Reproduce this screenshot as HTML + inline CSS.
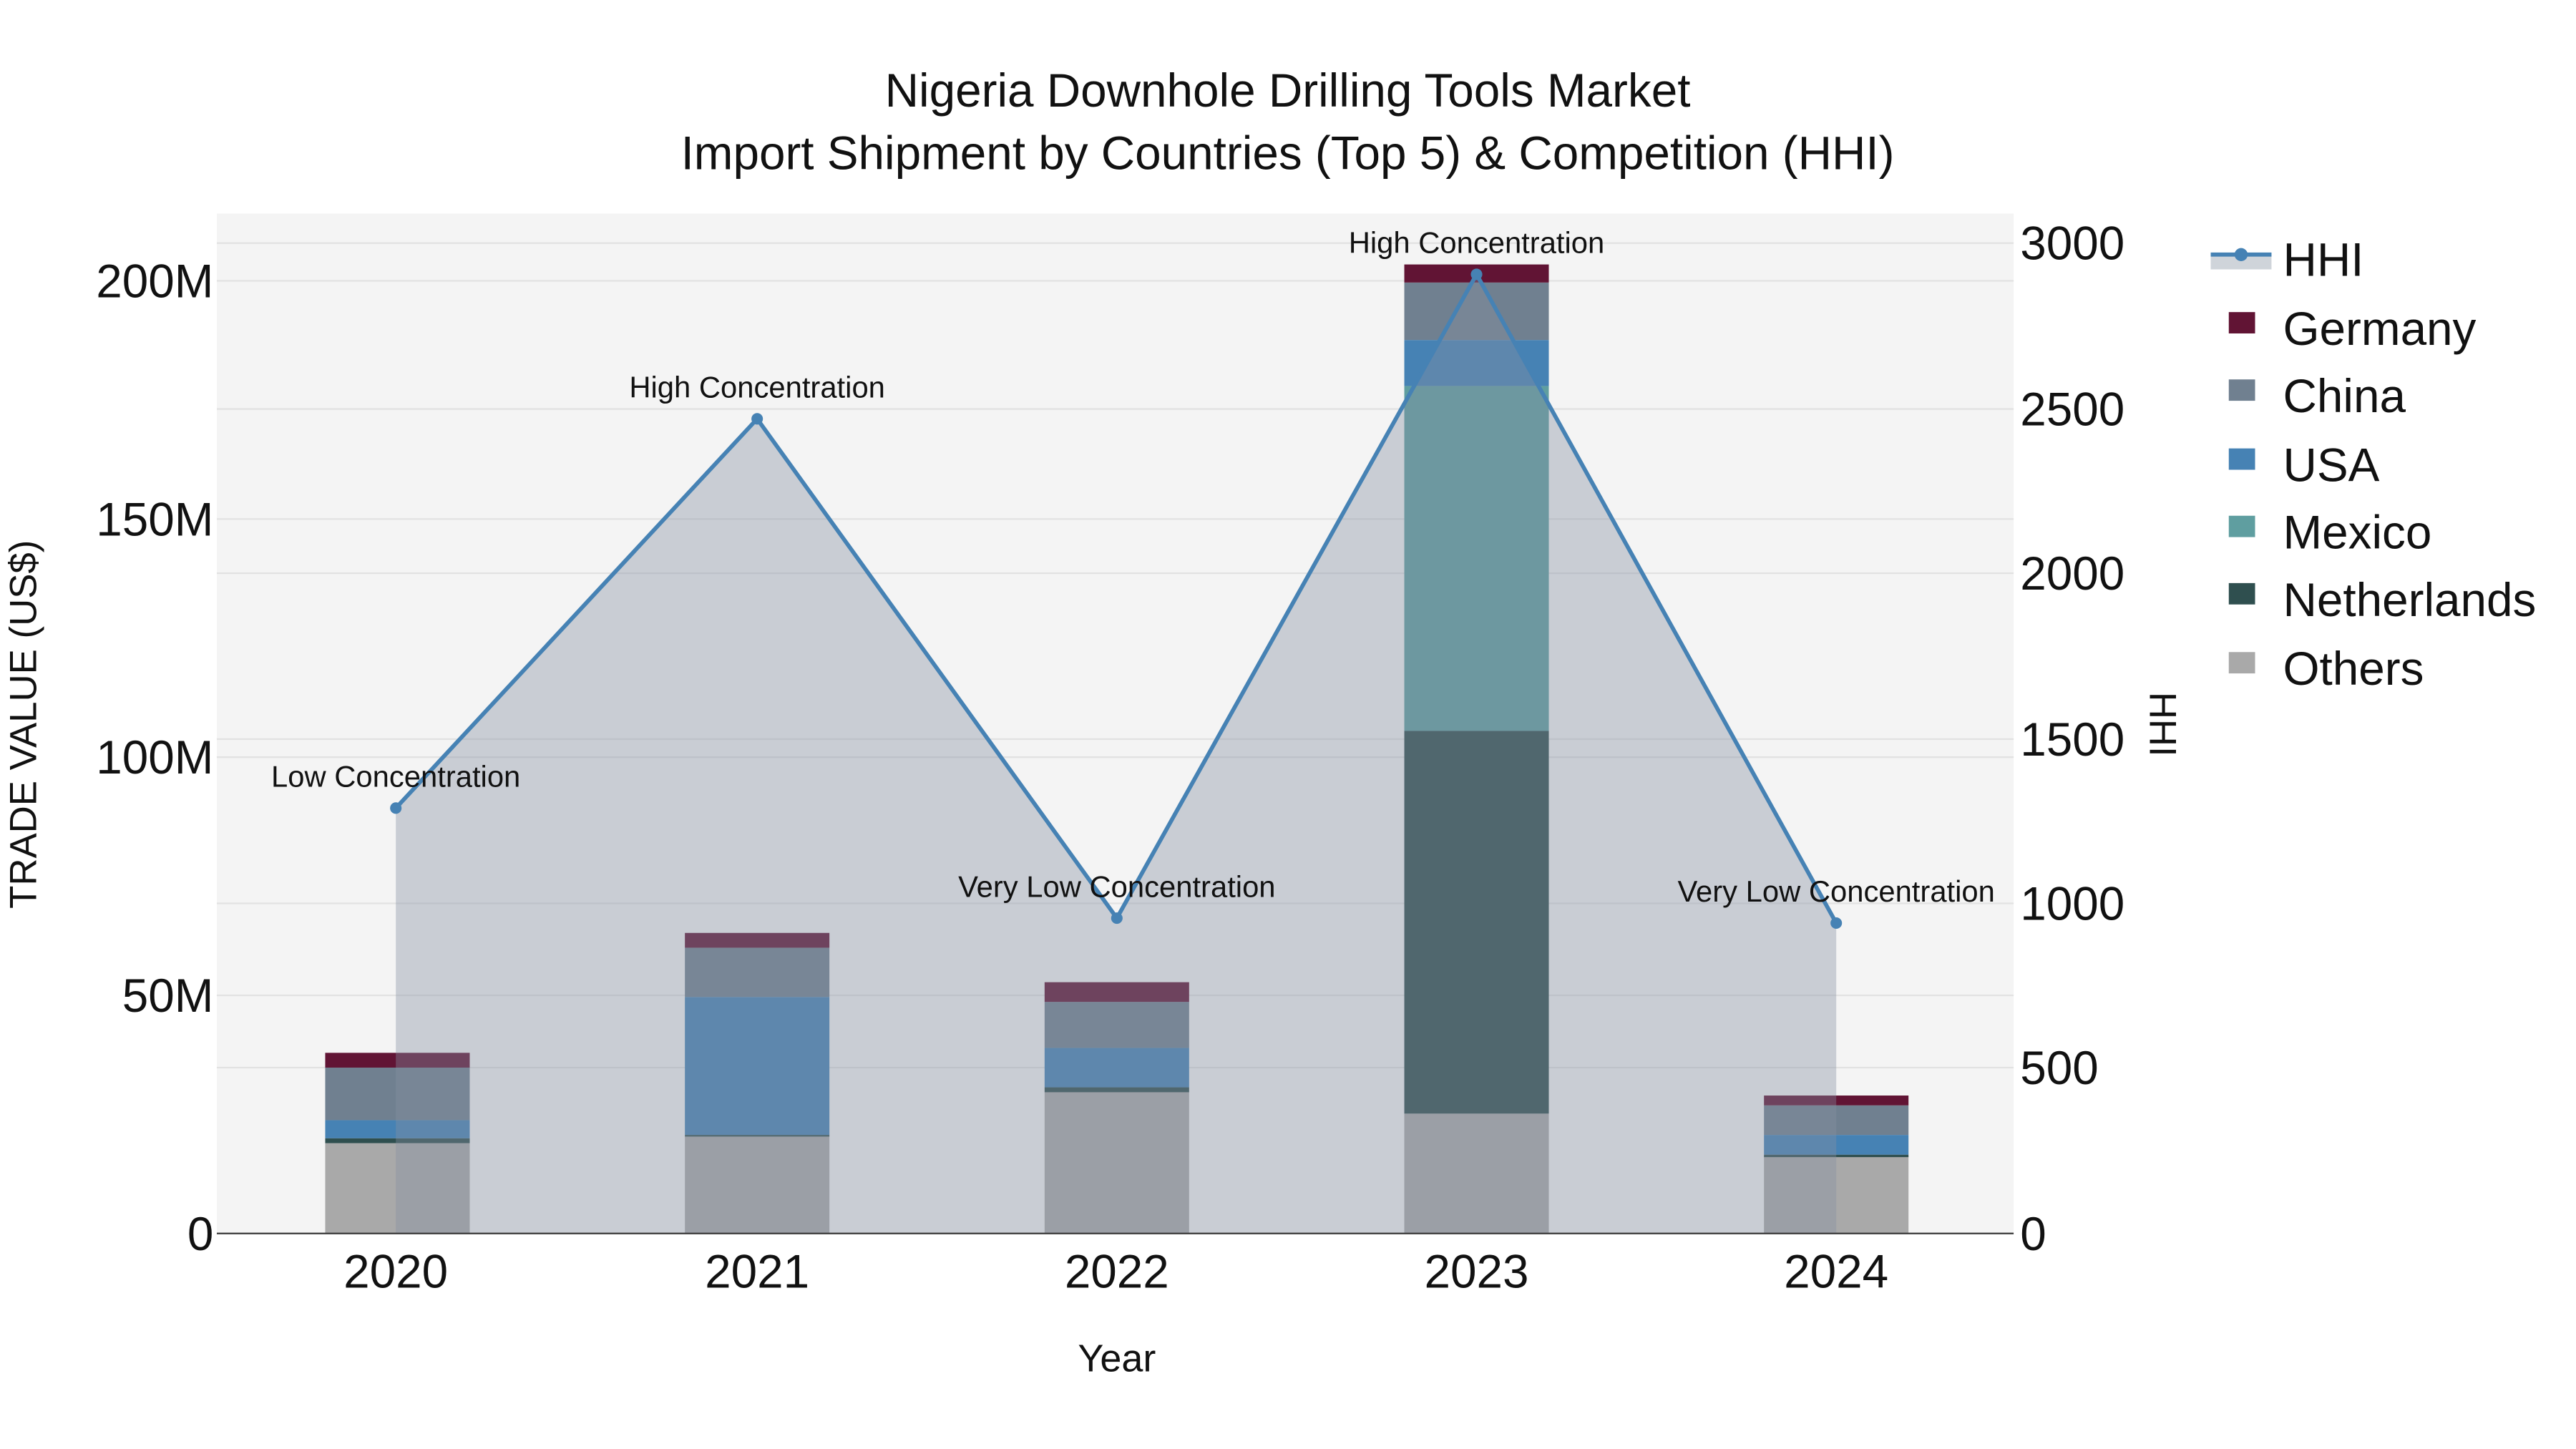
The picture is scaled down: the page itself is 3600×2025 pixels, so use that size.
<!DOCTYPE html>
<html><head><meta charset="utf-8"><style>html,body{margin:0;padding:0;background:#fff}svg{display:block}</style></head>
<body>
<svg width="3600" height="2025" viewBox="0 0 1568.4 882.2" xmlns="http://www.w3.org/2000/svg" font-family="Liberation Sans, Arial, sans-serif">
<rect x="0" y="0" width="1568.4" height="882.2" fill="#fff"/>
<rect x="132" y="130" width="1094" height="621" fill="#f4f4f4"/>
<g stroke="#e2e2e2" stroke-width="1">
<line x1="132" x2="1226" y1="171" y2="171"/><line x1="132" x2="1226" y1="316" y2="316"/><line x1="132" x2="1226" y1="461" y2="461"/><line x1="132" x2="1226" y1="606" y2="606"/>
<line x1="132" x2="1226" y1="148" y2="148"/><line x1="132" x2="1226" y1="249" y2="249"/><line x1="132" x2="1226" y1="349" y2="349"/><line x1="132" x2="1226" y1="450" y2="450"/><line x1="132" x2="1226" y1="550" y2="550"/><line x1="132" x2="1226" y1="650" y2="650"/>
</g>
<g>
<rect x="198" y="696" width="88" height="55" fill="#a9a9a9"/><rect x="198" y="693" width="88" height="3" fill="#2f4f4f"/><rect x="198" y="682" width="88" height="11" fill="#4682b4"/><rect x="198" y="650" width="88" height="32" fill="#708090"/><rect x="198" y="641" width="88" height="9" fill="#611434"/>
<rect x="417" y="692" width="88" height="59" fill="#a9a9a9"/><rect x="417" y="691" width="88" height="1" fill="#2f4f4f"/><rect x="417" y="607" width="88" height="84" fill="#4682b4"/><rect x="417" y="577" width="88" height="30" fill="#708090"/><rect x="417" y="568" width="88" height="9" fill="#611434"/>
<rect x="636" y="665" width="88" height="86" fill="#a9a9a9"/><rect x="636" y="662" width="88" height="3" fill="#2f4f4f"/><rect x="636" y="638" width="88" height="24" fill="#4682b4"/><rect x="636" y="610" width="88" height="28" fill="#708090"/><rect x="636" y="598" width="88" height="12" fill="#611434"/>
<rect x="855" y="678" width="88" height="73" fill="#a9a9a9"/><rect x="855" y="445" width="88" height="233" fill="#2f4f4f"/><rect x="855" y="235" width="88" height="210" fill="#5f9ea0"/><rect x="855" y="207" width="88" height="28" fill="#4682b4"/><rect x="855" y="172" width="88" height="35" fill="#708090"/><rect x="855" y="161" width="88" height="11" fill="#611434"/>
<rect x="1074" y="704" width="88" height="47" fill="#a9a9a9"/><rect x="1074" y="703" width="88" height="1.5" fill="#2f4f4f"/><rect x="1074" y="691" width="88" height="12" fill="#4682b4"/><rect x="1074" y="673" width="88" height="18" fill="#708090"/><rect x="1074" y="667" width="88" height="6" fill="#611434"/>
</g>
<path d="M241,751 L241,492 L461,255 L680,559 L899,167 L1118,562 L1118,751 Z" fill="rgb(132,143,161)" fill-opacity="0.385"/>
<polyline points="241,492 461,255 680,559 899,167 1118,562" fill="none" stroke="#4682b4" stroke-width="2.5"/>
<g fill="#4682b4"><circle cx="241" cy="492" r="3.5"/><circle cx="461" cy="255" r="3.5"/><circle cx="680" cy="559" r="3.5"/><circle cx="899" cy="167" r="3.5"/><circle cx="1118" cy="562" r="3.5"/></g>
<line x1="132" x2="1226" y1="751" y2="751" stroke="#444" stroke-width="1"/>
<g font-size="18.2" fill="#111" text-anchor="middle">
<text x="241" y="479">Low Concentration</text>
<text x="461" y="242">High Concentration</text>
<text x="680" y="546">Very Low Concentration</text>
<text x="899" y="154">High Concentration</text>
<text x="1118" y="549">Very Low Concentration</text>
</g>
<g font-size="28.6" fill="#111">
<text x="784" y="65" text-anchor="middle">Nigeria Downhole Drilling Tools Market</text>
<text x="784" y="103" text-anchor="middle">Import Shipment by Countries (Top 5) &amp; Competition (HHI)</text>
</g>
<g font-size="28.6" fill="#111" text-anchor="end">
<text x="130" y="181">200M</text><text x="130" y="326">150M</text><text x="130" y="471">100M</text><text x="130" y="616">50M</text><text x="130" y="761">0</text>
</g>
<g font-size="28.6" fill="#111" text-anchor="start">
<text x="1230" y="158">3000</text><text x="1230" y="259">2500</text><text x="1230" y="359">2000</text><text x="1230" y="460">1500</text><text x="1230" y="560">1000</text><text x="1230" y="660">500</text><text x="1230" y="761">0</text>
</g>
<g font-size="28.6" fill="#111" text-anchor="middle">
<text x="241" y="784">2020</text><text x="461" y="784">2021</text><text x="680" y="784">2022</text><text x="899" y="784">2023</text><text x="1118" y="784">2024</text>
</g>
<text x="680" y="835" font-size="23.5" fill="#111" text-anchor="middle">Year</text>
<text transform="translate(22,441) rotate(-90)" font-size="23" fill="#111" text-anchor="middle">TRADE VALUE (US$)</text>
<text transform="translate(1309,441) rotate(90)" font-size="23" fill="#111" text-anchor="middle">HHI</text>
<rect x="1346" y="154" width="37" height="10" fill="#cfd4da"/>
<line x1="1346" x2="1383" y1="155" y2="155" stroke="#4682b4" stroke-width="2.5"/>
<circle cx="1364.5" cy="155" r="4" fill="#4682b4"/>
<rect x="1357" y="190" width="16" height="13" fill="#611434"/>
<rect x="1357" y="231" width="16" height="13" fill="#708090"/>
<rect x="1357" y="273" width="16" height="13" fill="#4682b4"/>
<rect x="1357" y="314" width="16" height="13" fill="#5f9ea0"/>
<rect x="1357" y="355" width="16" height="13" fill="#2f4f4f"/>
<rect x="1357" y="397" width="16" height="13" fill="#a9a9a9"/>
<g font-size="28.6" fill="#111">
<text x="1390" y="168">HHI</text><text x="1390" y="210">Germany</text><text x="1390" y="251">China</text><text x="1390" y="293">USA</text><text x="1390" y="334">Mexico</text><text x="1390" y="375">Netherlands</text><text x="1390" y="417">Others</text>
</g>
</svg>
</body></html>
